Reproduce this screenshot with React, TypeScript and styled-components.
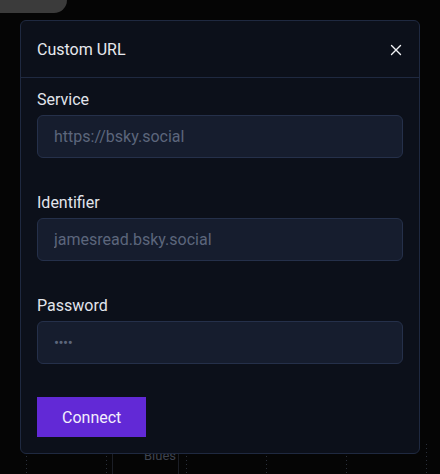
import React from "react";
import styled, { createGlobalStyle } from "styled-components";

const Global = createGlobalStyle`
  html, body { margin: 0; padding: 0; background: #050505; }
  body { font-family: Roboto, "Liberation Sans", sans-serif; }
  * { box-sizing: border-box; }
`;

const Page = styled.div`
  position: relative;
  width: 440px;
  height: 474px;
  overflow: hidden;
  display: flex;
  flex-direction: column;
  justify-content: space-between;
  background-color: #050505;
`;

const TopBar = styled.div`
  display: flex;
  height: 13px;
`;

const Pill = styled.div`
  width: 67px;
  height: 13px;
  background: #3b3b3b;
  border-bottom-right-radius: 14px;
`;

const BottomRow = styled.div`
  position: relative;
  display: flex;
  height: 30px;
  padding-left: 112px;
`;

const DottedGrid = styled.div`
  position: absolute;
  inset: 0;
  background-image: repeating-linear-gradient(
    to right,
    transparent 0,
    transparent 26px,
    #2a2f3a 26px,
    #2a2f3a 27px,
    transparent 27px,
    transparent 80px
  );
  -webkit-mask-image: repeating-linear-gradient(to bottom, #000 0 1px, transparent 1px 4px);
  mask-image: repeating-linear-gradient(to bottom, #000 0 1px, transparent 1px 4px);
`;

const BgCard = styled.div`
  position: relative;
  width: 67px;
  border-left: 1px solid #1b1e26;
  border-right: 1px solid #1b1e26;
  background: #050505;
  overflow: hidden;
  padding: 4px 0 0 31px;
  font-size: 13px;
  line-height: 16px;
  color: #3e434f;
  white-space: nowrap;
`;

const Overlay = styled.div`
  position: absolute;
  inset: 0;
  padding: 20px;
  display: flex;
  align-items: flex-start;
`;

const Modal = styled.div`
  width: 400px;
  background: #0c101a;
  border: 1px solid #1f2940;
  border-radius: 6px;
  display: flex;
  flex-direction: column;
`;

const Header = styled.div`
  display: flex;
  align-items: center;
  justify-content: space-between;
  padding: 17px 16px 15px;
  border-bottom: 1px solid #1f2940;
`;

const Title = styled.div`
  font-size: 16px;
  line-height: 24px;
  color: #e6e8ee;
`;

const CloseButton = styled.button`
  width: 24px;
  height: 24px;
  margin-right: -5px;
  display: flex;
  align-items: center;
  justify-content: center;
  background: transparent;
  border: none;
  padding: 0;
  color: #f2f3f6;
  cursor: pointer;
`;

const Body = styled.div`
  display: flex;
  flex-direction: column;
  padding: 12px 16px 16px;
`;

const Field = styled.label`
  display: flex;
  flex-direction: column;
  gap: 5px;
  margin-bottom: 35px;
`;

const Label = styled.span`
  font-size: 16px;
  line-height: 20px;
  color: #e2e5ec;
`;

const Input = styled.input<{ $dots?: boolean }>`
  height: 43px;
  width: 100%;
  padding: 0 16px;
  background: #161d2e;
  border: 1px solid #25304a;
  border-radius: 6px;
  font-family: Roboto, "Liberation Sans", sans-serif;
  font-size: 16px;
  color: #e2e5ec;
  outline: none;
  &::placeholder {
    color: #5c667c;
    letter-spacing: ${(p) => (p.$dots ? "-0.5px" : "normal")};
    font-size: ${(p) => (p.$dots ? "15px" : "16px")};
  }
`;

const ConnectButton = styled.button`
  align-self: flex-start;
  margin-top: -2px;
  height: 40px;
  padding: 0 25px;
  background: #6229d6;
  border: none;
  border-radius: 0;
  font-family: Roboto, "Liberation Sans", sans-serif;
  font-size: 16px;
  color: #f3f0fc;
  cursor: pointer;
`;

export default function App() {
  return (
    <>
      <Global />
      <Page>
        <TopBar>
          <Pill />
        </TopBar>
        <BottomRow>
          <DottedGrid />
          <BgCard>Blues</BgCard>
        </BottomRow>
        <Overlay>
          <Modal>
            <Header>
              <Title>Custom URL</Title>
              <CloseButton aria-label="Close">
                <svg width="12" height="12" viewBox="0 0 12 12">
                  <path
                    d="M1.5 1.5 L10.5 10.5 M10.5 1.5 L1.5 10.5"
                    stroke="currentColor"
                    strokeWidth="1.4"
                    strokeLinecap="round"
                  />
                </svg>
              </CloseButton>
            </Header>
            <Body>
              <Field>
                <Label>Service</Label>
                <Input placeholder="https://bsky.social" />
              </Field>
              <Field>
                <Label>Identifier</Label>
                <Input placeholder="jamesread.bsky.social" />
              </Field>
              <Field>
                <Label>Password</Label>
                <Input type="password" placeholder="••••" $dots />
              </Field>
              <ConnectButton>Connect</ConnectButton>
            </Body>
          </Modal>
        </Overlay>
      </Page>
    </>
  );
}
